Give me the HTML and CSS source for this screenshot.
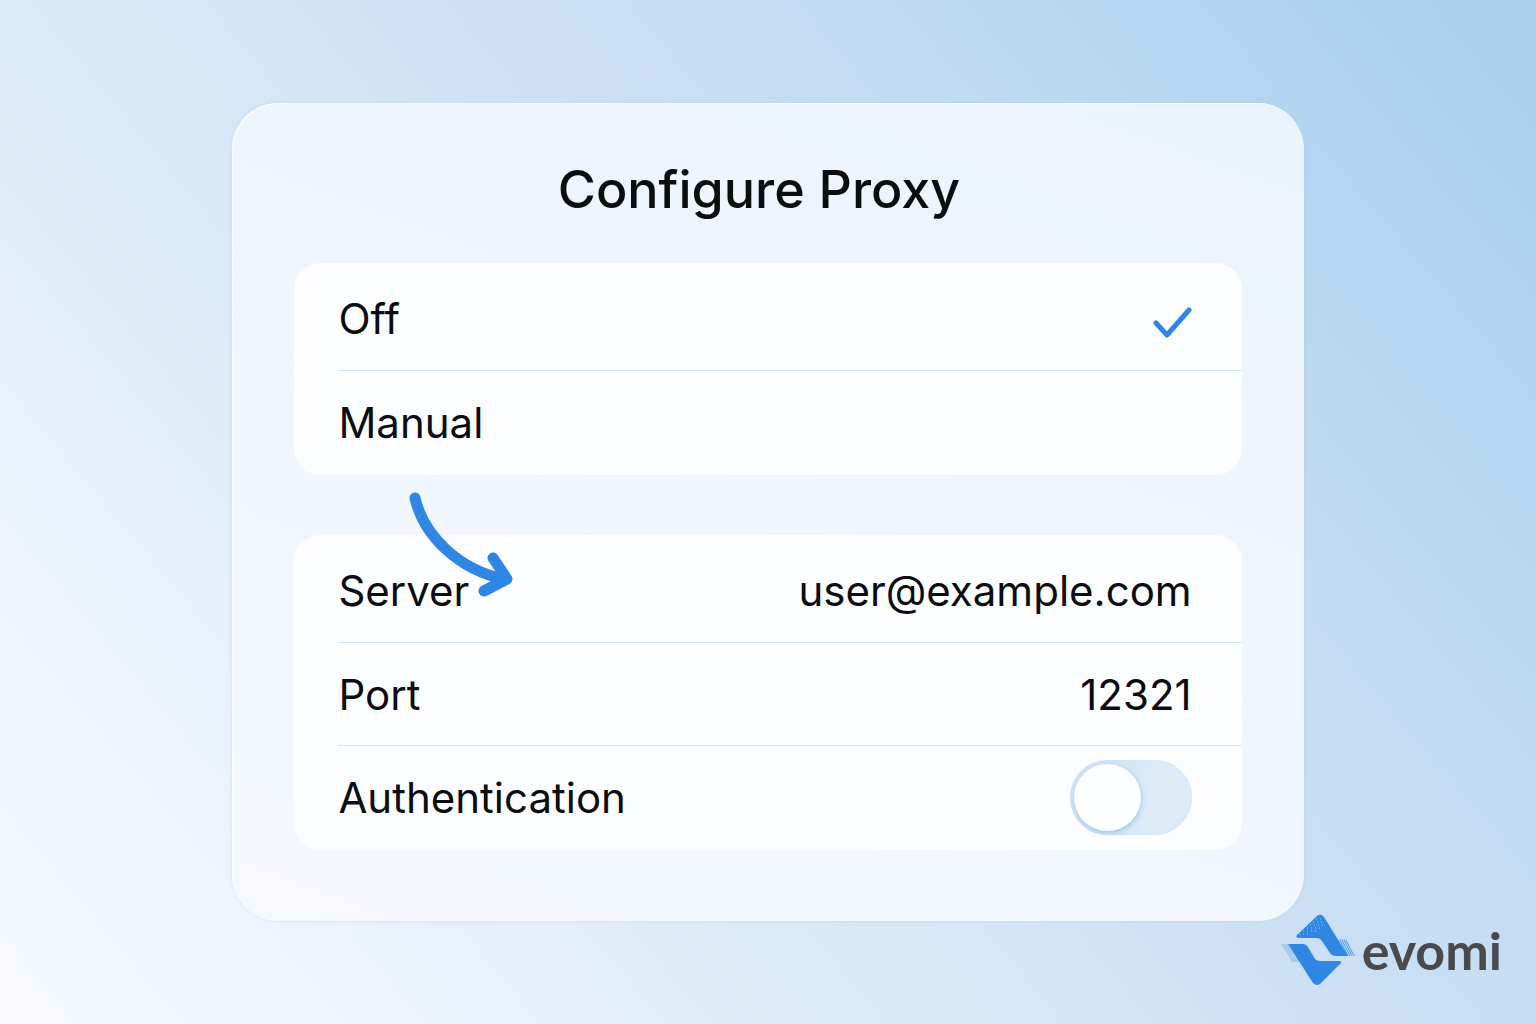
FILE: index.html
```
<!DOCTYPE html>
<html lang="en">

<head>
    <meta charset="UTF-8">
    <title>Configure Proxy</title>
    <link rel="stylesheet" href="styles.css">
</head>

<body>

<main class="page">
    <form class="card">
        <h1 class="title">Configure Proxy</h1>

        <div class="group">
            <label class="row">
                <span>Off</span>
                <input class="radio" type="radio" name="mode" value="off" checked>
                <svg class="check" viewBox="0 0 40 40" aria-hidden="true">
                    <path d="M4 24 L15 36 L37 11"/>
                </svg>
            </label>
            <label class="row">
                <span>Manual</span>
                <input class="radio" type="radio" name="mode" value="manual">
                <svg class="check" viewBox="0 0 40 40" aria-hidden="true">
                    <path d="M4 24 L15 36 L37 11"/>
                </svg>
            </label>
        </div>

        <div class="group">
            <!-- arrow from Manual down to Server -->
            <svg class="arrow" viewBox="0 0 106 106" aria-hidden="true">
                <path d="M7 7 C16 46 52 79 96 88"/>
                <path d="M85 67 L99 88 L76 100"/>
            </svg>
            <div class="row">
                <label for="server">Server</label>
                <input class="field" id="server" type="text" value="user@example.com">
            </div>
            <div class="row">
                <label for="port">Port</label>
                <input class="field" id="port" type="text" inputmode="numeric" value="12321">
            </div>
            <div class="row">
                <label for="auth">Authentication</label>
                <input class="switch" id="auth" type="checkbox" role="switch">
            </div>
        </div>
    </form>
</main>

<div class="brand">
    <svg class="brand-mark" viewBox="0 0 76 72" aria-hidden="true">
        <path class="pale" d="M0 30 H10 L20 48 H11 Z"/>
        <path class="pale" d="M56 25 H65 L75 42 H64 Z"/>
        <path d="M16 21 L36 2 Q40 -1 43 3 L67 42 H54 Q51 42 49 39 L41 27 Q39 24 36 24 H18 Q14 24 16 21 Z"/>
        <path d="M7 30 H22 Q25 30 27 33 L34 45 Q36 47 39 47 H58 Q62 47 59 50 L40 69 Q36 73 32 69 Z"/>
        <path class="speck" d="M35 5 H42 M32 8 H44 M29 11 H42 M26 14 H40 M22 17 H35 M18 20 H30"/>
        <path class="dots" d="M59 27 H66 M60 29 H67 M61 31 H68 M62 33 H70 M63 35 H71 M64 37 H72 M65 39 H73 M66 41 H74"/>
    </svg>
    <span>evomi</span>
</div>

</body>

</html>
```

FILE: styles.css
```
* {
    margin: 0;
    padding: 0;
    box-sizing: border-box;
}
body {
    min-height: 100vh;
    position: relative;
    font-family: Inter, "Liberation Sans", sans-serif;
    font-size: 42px;
    color: #0c0d0f;
    background: linear-gradient(50deg, #f5f9ff 0%, #eff5fe 15%, #deecf8 31%, #d5e6f6 44%, #c8def4 62%, #bad8f0 79%, #abd0ed 96%);
}
.page {
    padding: 103px 15%;
}
.card {
    padding: 52px 62px 71px;
    margin: 0 2px;
    border-radius: 46px;
    background: linear-gradient(20deg, #f5f9fe 0%, #f0f6fe 50%, #ebf3fc 100%);
    box-shadow: inset 1px 1px 1px #fafcff, 0 0 3px rgba(160, 200, 235, .5);
}
.title {
    margin-right: 18px;
    margin-bottom: 38px;
    font-size: 52px;
    font-weight: 500;
    line-height: 70px;
    text-align: center;
}
.group {
    position: relative;
    padding: 4px 0 2px;
    border-radius: 26px;
    background: #fcfdff;
}
.group + .group {
    margin-top: 60px;
}
.row {
    display: flex;
    align-items: center;
    justify-content: space-between;
    min-height: 103px;
    margin-left: 44px;
    padding-right: 50px;
}
.row + .row {
    border-top: 1px solid #d3e5f5;
}
.radio {
    position: absolute;
    opacity: 0;
}
.check {
    display: none;
    width: 40px;
    height: 40px;
    fill: none;
    stroke: #2f86e3;
    stroke-width: 5;
    stroke-linecap: round;
    stroke-linejoin: round;
}
.radio:checked + .check {
    display: block;
}
.field {
    flex: 1;
    min-width: 0;
    border: 0;
    outline: 0;
    font: inherit;
    color: inherit;
    text-align: right;
    background: none;
}
.switch {
    appearance: none;
    width: 122px;
    height: 75px;
    padding: 4px;
    border-radius: 38px;
    background: linear-gradient(100deg, #cfe2f6 30%, #ddebf7 65%);
    box-shadow: inset 0 0 2px #c8dff3;
    cursor: pointer;
}
.switch::before {
    content: "";
    display: block;
    width: 67px;
    height: 67px;
    border-radius: 50%;
    background: #fdfeff;
    box-shadow: 1px 2px 4px rgba(120, 170, 220, .5);
}
.switch:checked {
    background: #2f86e3;
}
.switch:checked::before {
    margin-left: auto;
}
.arrow {
    position: absolute;
    top: -44px;
    left: 114px;
    width: 106px;
    height: 106px;
    fill: none;
    stroke: #2f86e3;
    stroke-width: 11;
    stroke-linecap: round;
    stroke-linejoin: round;
}
.brand {
    position: absolute;
    right: 34px;
    bottom: 38px;
    display: flex;
    align-items: center;
    gap: 5px;
    font-family: Lato, sans-serif;
    font-size: 52px;
    font-weight: 700;
    line-height: 72px;
    color: #4a4a4c;
}
.brand-mark {
    width: 76px;
    height: 72px;
    fill: #2f86e3;
}
.brand-mark .pale {
    fill: #a9cdec;
}
.brand-mark .speck,
.brand-mark .dots {
    fill: none;
    stroke: #a9cdec;
    stroke-width: 1;
    stroke-dasharray: 1 3;
}
.brand-mark .dots {
    stroke: #2f86e3;
    stroke-dasharray: 1 1;
}
```
